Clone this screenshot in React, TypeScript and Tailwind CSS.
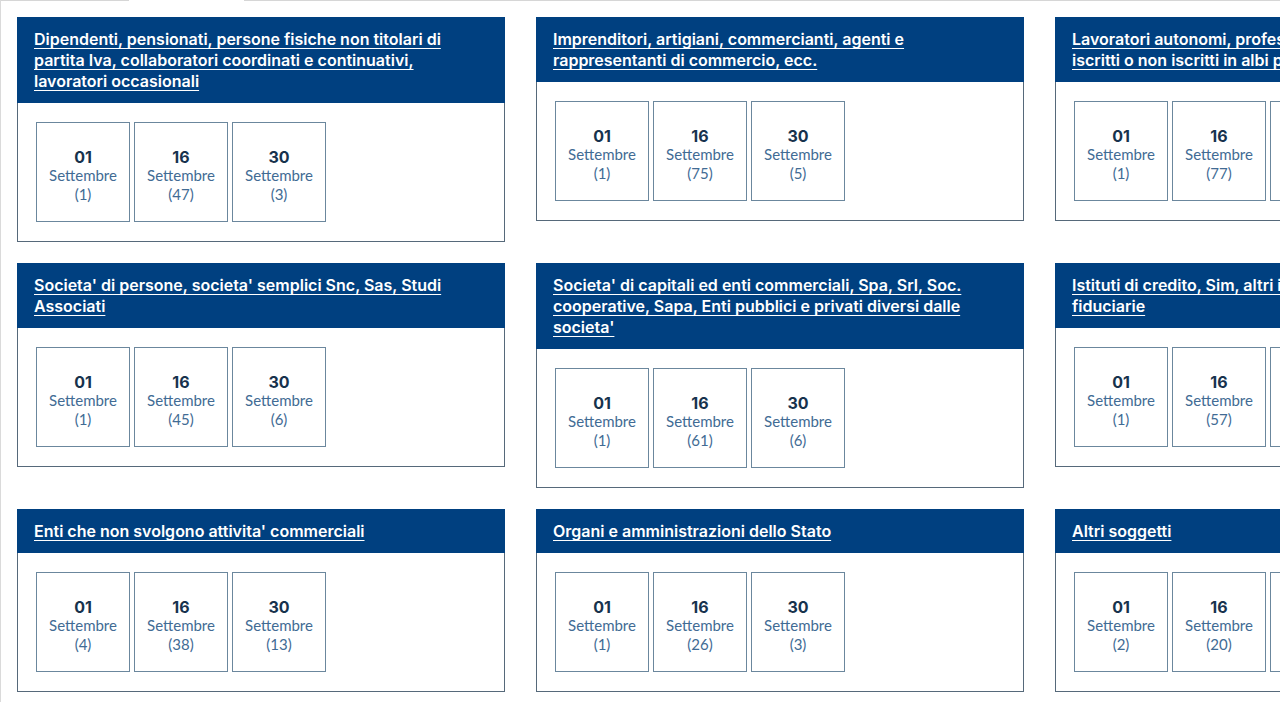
import React from "react";

type Card = {
  title: string;
  counts: [number, number, number];
};

const cards: Card[] = [
  {
    title:
      "Dipendenti, pensionati, persone fisiche non titolari di\npartita Iva, collaboratori coordinati e continuativi,\nlavoratori occasionali",
    counts: [1, 47, 3],
  },
  {
    title: "Imprenditori, artigiani, commercianti, agenti e\nrappresentanti di commercio, ecc.",
    counts: [1, 75, 5],
  },
  {
    title: "Lavoratori autonomi, professionisti e artisti,\niscritti o non iscritti in albi professionali",
    counts: [1, 77, 4],
  },
  {
    title: "Societa' di persone, societa' semplici Snc, Sas, Studi\nAssociati",
    counts: [1, 45, 6],
  },
  {
    title:
      "Societa' di capitali ed enti commerciali, Spa, Srl, Soc.\ncooperative, Sapa, Enti pubblici e privati diversi dalle\nsocieta'",
    counts: [1, 61, 6],
  },
  {
    title: "Istituti di credito, Sim, altri intermediari e societa'\nfiduciarie",
    counts: [1, 57, 5],
  },
  {
    title: "Enti che non svolgono attivita' commerciali",
    counts: [4, 38, 13],
  },
  {
    title: "Organi e amministrazioni dello Stato",
    counts: [1, 26, 3],
  },
  {
    title: "Altri soggetti",
    counts: [2, 20, 4],
  },
];

const days = ["01", "16", "30"];

function DateBox({ day, count }: { day: string; count: number }) {
  return (
    <a
      href="#"
      className="flex h-[100px] w-[94px] shrink-0 flex-col items-center border border-[#6b879d] pt-[25px] no-underline"
    >
      <span className="font-['Inter',sans-serif] text-[16px] font-bold leading-[18px] text-[#17324d]">
        {day}
      </span>
      <span className="font-['Lato',sans-serif] text-[15px] leading-[18px] text-[#416b94]">Settembre</span>
      <span className="font-['Lato',sans-serif] text-[15px] leading-[20px] text-[#416b94]">({count})</span>
    </a>
  );
}

function CategoryCard({ card }: { card: Card }) {
  return (
    <div className="w-[488px] border border-[#56697a] bg-white">
      <div className="-mx-px -mt-px whitespace-pre-line bg-[#004080] px-[17px] pb-[11px] pt-[12px] font-['Inter',sans-serif] text-[16px] font-semibold leading-[21px]">
        <a href="#" className="text-white underline decoration-1 underline-offset-[3px]">
          {card.title}
        </a>
      </div>
      <div className="flex gap-1 px-[18px] pb-[19px] pt-[19px]">
        {days.map((d, i) => (
          <DateBox key={d} day={d} count={card.counts[i]} />
        ))}
      </div>
    </div>
  );
}

export default function App() {
  return (
    <div className="relative h-[702px] w-[1280px] overflow-hidden border-l border-[#dadada] bg-white">
      <div className="flex h-px">
        <div className="w-[128px] bg-[#d6d6d6]" />
        <div className="w-[115px]" />
        <div className="flex-1 bg-[#d6d6d6]" />
      </div>
      <div className="grid w-max grid-cols-[488px_488px_488px] items-start gap-x-[31px] gap-y-[21px] pl-[16px] pt-[16px]">
        {cards.map((c) => (
          <CategoryCard key={c.title} card={c} />
        ))}
      </div>
    </div>
  );
}
